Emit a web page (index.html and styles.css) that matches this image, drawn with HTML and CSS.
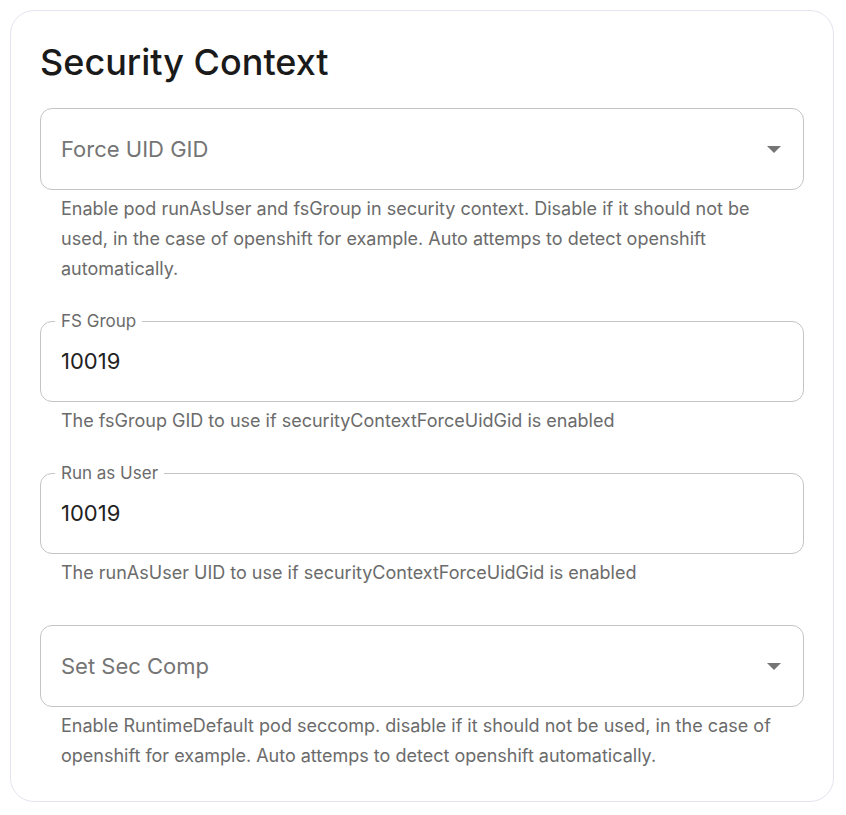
FILE: index.html
```html
<!DOCTYPE html>
<html lang="en">
  <head>
    <title>Security Context</title>
    <meta charset="utf-8" />
    <link rel="stylesheet" href="styles.css">
  </head>
  <body>
    <div class="card">
      <h1 class="title">Security Context</h1>

      <div class="group">
        <div class="field select">
          <span class="placeholder">Force UID GID</span>
          <svg class="arrow" width="14" height="7" viewBox="0 0 14 7"><path d="M0 0h14L7 7z" fill="#757575"/></svg>
        </div>
        <p class="helper">Enable pod runAsUser and fsGroup in security context. Disable if it should not be used, in the case of openshift for example. Auto attemps to detect openshift automatically.</p>
      </div>

      <div class="group">
        <fieldset class="field labelled">
          <legend>FS Group</legend>
          <input type="text" value="10019" />
        </fieldset>
        <p class="helper">The fsGroup GID to use if securityContextForceUidGid is enabled</p>
      </div>

      <div class="group">
        <fieldset class="field labelled">
          <legend>Run as User</legend>
          <input type="text" value="10019" />
        </fieldset>
        <p class="helper">The runAsUser UID to use if securityContextForceUidGid is enabled</p>
      </div>

      <div class="group">
        <div class="field select">
          <span class="placeholder">Set Sec Comp</span>
          <svg class="arrow" width="14" height="7" viewBox="0 0 14 7"><path d="M0 0h14L7 7z" fill="#757575"/></svg>
        </div>
        <p class="helper">Enable RuntimeDefault pod seccomp. disable if it should not be used, in the case of openshift for example. Auto attemps to detect openshift automatically.</p>
      </div>
    </div>
  </body>
</html>
```

FILE: styles.css
```css
body {
  margin: 0;
  padding: 10px 12px 13px 10px;
  background: #ffffff;
  font-family: Inter, "Noto Sans", sans-serif;
}

.card {
  border: 1px solid #e4e4f0;
  border-radius: 24px;
  padding: 29px 29px 30px 29px;
  display: flex;
  flex-direction: column;
  gap: 37px;
}

.title {
  margin: 0 0 -13px 0;
  font-size: 36px;
  font-weight: 500;
  line-height: 44px;
  color: #1a1a1a;
}

.group {
  display: flex;
  flex-direction: column;
}

.field {
  box-sizing: border-box;
  height: 81px;
  border: 1px solid #c4c4c4;
  border-radius: 12px;
  margin: 0;
}

.select {
  display: flex;
  align-items: center;
  justify-content: space-between;
  padding: 0 22px 0 20px;
  height: 82px;
}

.placeholder {
  font-size: 22px;
  color: #757575;
}

.arrow {
  display: block;
}

.labelled {
  padding: 0 14px;
  margin-top: -10px;
  height: 91px;
}

.labelled legend {
  padding: 0 6px;
  font-size: 17px;
  line-height: 20px;
  color: #6b6b6b;
}

.labelled input {
  box-sizing: border-box;
  width: 100%;
  border: none;
  outline: none;
  padding: 0 6px;
  height: 60px;
  font-family: Inter, "Noto Sans", sans-serif;
  font-size: 22px;
  color: #222222;
  background: transparent;
}

.helper {
  margin: 4px 0 0 0;
  padding: 0 20px 0 21px;
  font-size: 18px;
  line-height: 30px;
  color: #6b6b6b;
}
```
